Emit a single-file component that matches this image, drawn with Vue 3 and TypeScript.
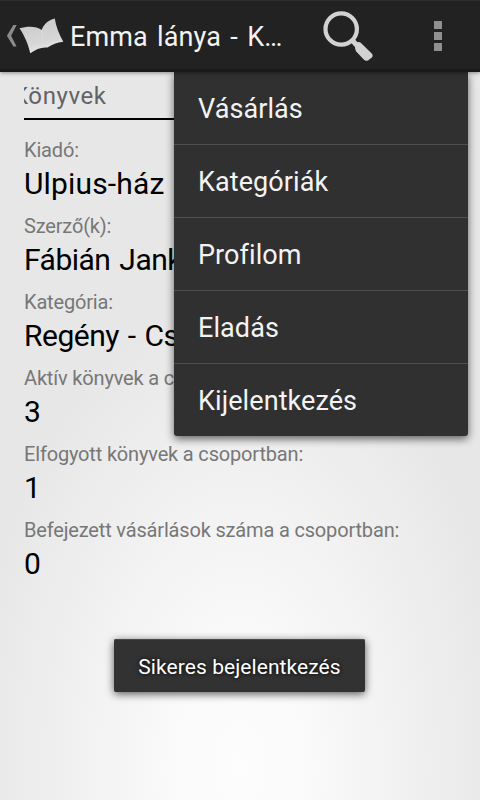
<script setup lang="ts">
interface Field {
  label: string
  value: string
  tight?: boolean
}

const title = 'Emma lánya - K…'
const fields: Field[] = [
  { label: 'Kiadó:', value: 'Ulpius-ház' },
  { label: 'Szerző(k):', value: 'Fábián Janka', tight: true },
  { label: 'Kategória:', value: 'Regény - Csa', tight: true },
  { label: 'Aktív könyvek a csoportban:', value: '3' },
  { label: 'Elfogyott könyvek a csoportban:', value: '1' },
  { label: 'Befejezett vásárlások száma a csoportban:', value: '0' },
]
const menuItems: string[] = ['Vásárlás', 'Kategóriák', 'Profilom', 'Eladás', 'Kijelentkezés']
</script>

<template>
  <div class="screen">
    <header class="bar">
      <svg class="back" width="12" height="24" viewBox="0 0 12 24">
        <path d="M7.4 1H10.6L5.1 11.7L10.6 22.4H7.4L0.9 11.7Z" fill="#8c8c8c" />
      </svg>
      <svg class="logo" width="48" height="40" viewBox="0 0 48 40">
        <defs>
          <linearGradient id="page" x1="0" y1="0" x2="0.3" y2="1">
            <stop offset="0" stop-color="#c9c9c9" />
            <stop offset="0.75" stop-color="#d6d6d6" />
            <stop offset="1" stop-color="#e6e6e6" />
          </linearGradient>
        </defs>
        <path
          d="M1.5 12.3C9 10.2 18 9.8 23.7 14C25.5 8.5 30 4.3 36.8 2.5C38 10.5 41 18 45.3 25.8C39 26.3 34 29 29.5 31.6C24 30.8 18 33 12.2 37.3C10.5 29 6.5 19.5 1.5 12.3Z"
          fill="url(#page)"
        />
        <path d="M23.7 14C24 20 25.5 25.5 28 30" fill="none" stroke="#dadada" stroke-width="1.2" />
      </svg>
      <h1 class="title">{{ title }}</h1>
      <svg class="search" width="52" height="54" viewBox="0 0 52 54">
        <circle cx="18.2" cy="20" r="15.7" fill="none" stroke="#d2d2d2" stroke-width="4.2" />
        <path d="M29 31L34 36.5" stroke="#d2d2d2" stroke-width="5" />
        <path
          d="M33.3 33.8Q36 32.3 38 33.9L48.5 44.2Q50.7 46.5 48.8 48.4L45.3 51.3Q43 52.6 41 50.8L33.2 42.5Q31.8 40.5 32 38Z"
          fill="#d2d2d2"
        />
      </svg>
      <div class="overflow"><i></i><i></i><i></i></div>
    </header>

    <main class="content">
      <div class="tab"><span class="tab-text">Könyvek</span></div>
      <dl class="fields">
        <div v-for="field in fields" :key="field.label" class="field">
          <dt>{{ field.label }}</dt>
          <dd :class="{ tight: field.tight }">{{ field.value }}</dd>
        </div>
      </dl>
    </main>

    <nav class="menu">
      <a v-for="item in menuItems" :key="item" class="menu-item">{{ item }}</a>
    </nav>

    <div class="toast">Sikeres bejelentkezés</div>
  </div>
</template>

<style>
body {
  margin: 0;
}
</style>

<style scoped>
.screen {
  position: relative;
  width: 480px;
  height: 800px;
  overflow: hidden;
  font-family: Roboto, 'Liberation Sans', sans-serif;
  background: radial-gradient(ellipse 270px 470px at 240px 765px, #fdfdfd 0%, #fafafa 25%, #e7e7e7 100%);
}

.bar {
  position: relative;
  z-index: 3;
  box-sizing: border-box;
  display: flex;
  align-items: center;
  height: 72px;
  padding-left: 6px;
  background: #222;
  border-top: 1px solid #2e2e2e;
  border-bottom: 3px solid #1a1a1a;
  box-shadow: 0 1px 4px rgba(0, 0, 0, 0.4);
}

.back {
  margin-top: 2px;
}

.logo {
  margin-top: 1px;
}

.title {
  width: 249px;
  margin: 4px 0 0 4px;
  color: #f3f3f3;
  font-size: 27px;
  font-weight: 400;
  line-height: 32px;
  letter-spacing: 0.1px;
  word-spacing: 2.5px;
  white-space: nowrap;
}

.search {
  margin-left: 4px;
  margin-top: 2px;
}

.overflow {
  display: flex;
  flex-direction: column;
  gap: 3px;
  margin: 1px 0 0 59px;
}

.overflow i {
  width: 8px;
  height: 8px;
  background: #909090;
}

.content {
  padding: 0 24px;
}

.tab {
  height: 46px;
  overflow: hidden;
  border-bottom: 2px solid #000;
}

.tab-text {
  display: block;
  margin: 10px 0 0 -11px;
  color: #636363;
  font-size: 24px;
  line-height: 28px;
  letter-spacing: 0.6px;
}

.fields {
  margin: 0;
  padding-top: 17px;
}

.field {
  height: 76px;
  white-space: nowrap;
}

dt {
  color: #777;
  font-size: 20px;
  line-height: 26px;
  letter-spacing: -0.17px;
}

dd {
  margin: 3px 0 0;
  color: #000;
  font-size: 30px;
  line-height: 36px;
  letter-spacing: 0.15px;
}

dd.tight {
  letter-spacing: -0.5px;
  word-spacing: 2px;
}

.menu {
  position: absolute;
  z-index: 2;
  top: 72px;
  left: 174px;
  width: 294px;
  background: #303030;
  border-radius: 0 0 3px 3px;
  box-shadow: 0 3px 8px rgba(0, 0, 0, 0.6);
}

.menu-item {
  display: block;
  height: 72px;
  padding-left: 24px;
  color: #f3f3f3;
  font-size: 27px;
  line-height: 74px;
  letter-spacing: 0.08px;
}

.menu-item + .menu-item {
  border-top: 1px solid #505050;
}

.toast {
  position: absolute;
  top: 639px;
  left: 114px;
  box-sizing: border-box;
  width: 251px;
  height: 53px;
  color: #fff;
  font-size: 21px;
  line-height: 56px;
  letter-spacing: 0.07px;
  text-align: center;
  white-space: nowrap;
  background: #323232;
  border-radius: 2px;
  box-shadow: 0 2px 9px rgba(0, 0, 0, 0.65), inset 0 1px 0 #484848;
  text-shadow: 0 0 4px #000;
}
</style>
